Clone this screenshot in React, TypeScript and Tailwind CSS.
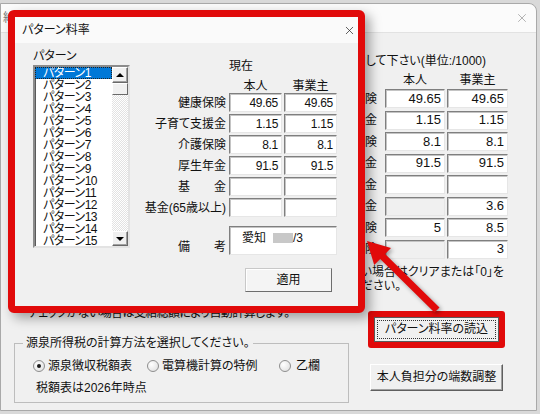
import React from 'react';
import { X } from 'lucide-react';

const dialogRows = [
  { label: '健康保険', a: '49.65', b: '49.65' },
  { label: '子育て支援金', a: '1.15', b: '1.15' },
  { label: '介護保険', a: '8.1', b: '8.1' },
  { label: '厚生年金', a: '91.5', b: '91.5' },
  { label: '基金', spread: true, a: '', b: '' },
  { label: '基金(65歳以上)', a: '', b: '' },
];

const mainRows = [
  { label: '保険', a: '49.65', b: '49.65' },
  { label: '援金', a: '1.15', b: '1.15' },
  { label: '保険', a: '8.1', b: '8.1' },
  { label: '年金', a: '91.5', b: '91.5' },
  { label: '基金', a: '', b: '' },
  { label: '出金', a: '', b: '3.6', off: true },
  { label: '保険', a: '5', b: '8.5' },
  { label: '保険', a: '', b: '3', off: true },
];

const patterns = Array.from({ length: 15 }, (_, i) => `パターン${i + 1}`);

const Box: React.FC<{ value: string; off?: boolean; className?: string }> = ({ value, off, className }) => (
  <div
    className={`flex items-center justify-end pr-[3px] border border-t-[#7f7f7f] border-l-[#7f7f7f] border-b-[#e6e6e6] border-r-[#e6e6e6] shadow-[inset_1px_1px_0_#c4c4c4] ${off ? 'bg-[#f0f0f0]' : 'bg-white'} ${className ?? ''}`}
  >
    {value}
  </div>
);

const Spread: React.FC<{ text: string }> = ({ text }) => (
  <span className="flex w-[48px] justify-between">
    {text.split('').map((c, i) => (
      <span key={i}>{c}</span>
    ))}
  </span>
);

const Radio: React.FC<{ checked?: boolean }> = ({ checked }) => (
  <span className="w-[12px] h-[12px] rounded-full border border-[#8e8e8e] bg-[radial-gradient(circle_at_35%_35%,#ffffff,#dcdcdc)] flex items-center justify-center shrink-0">
    {checked && <span className="w-[4px] h-[4px] rounded-full bg-[#1a1a1a]" />}
  </span>
);

const ArrowBtn: React.FC<{ up?: boolean; className?: string }> = ({ up, className }) => (
  <div className={`bg-[#f0f0f0] border border-t-white border-l-white border-b-[#696969] border-r-[#696969] shadow-[inset_-1px_-1px_0_#a0a0a0] flex items-center justify-center ${className ?? ''}`}>
    {up ? (
      <span className="w-0 h-0 border-l-[4px] border-r-[4px] border-b-[4px] border-l-transparent border-r-transparent border-b-black" />
    ) : (
      <span className="w-0 h-0 border-l-[4px] border-r-[4px] border-t-[4px] border-l-transparent border-r-transparent border-t-black" />
    )}
  </div>
);

export default function App() {
  return (
    <div className="w-[540px] h-[414px] relative overflow-hidden bg-[#d9d9d9] text-[12px] text-[#111] font-['Liberation_Sans','Noto_Sans_CJK_JP',sans-serif] [font-feature-settings:'palt']">
      {/* main window */}
      <div className="mt-[3px] w-[537px] h-[408px] bg-[#f0f0f0] border border-[#a9a9a9] rounded-tr-[8px] flex flex-col overflow-hidden">
        <div className="h-[29px] shrink-0 bg-[#fbfbfb] border-b border-[#e2e2e2] rounded-tr-[8px] flex items-center justify-between pl-[2px] pr-[7px]">
          <span className="text-[#777] text-[12px]">給</span>
          <X size={14} strokeWidth={1.1} className="text-[#8a8a8a]" />
        </div>

        <div className="flex-1 flex min-w-0">
          {/* left column, mostly behind the dialog */}
          <div className="w-[349px] shrink-0 flex flex-col pt-[273px]">
            <div className="pl-[27px] leading-[14px] whitespace-nowrap tracking-[-0.6px]">チェックがない場合は支給総額により自動計算します。</div>
            <fieldset className="mt-[16px] ml-[13px] w-[335px] m-0 p-0 min-w-0 border border-[#bdbdbd] pb-[7px]">
              <legend className="ml-[8px] px-[3px] leading-[14px]">源泉所得税の計算方法を選択してください。</legend>
              <div className="pt-[9px] pl-[18px] flex items-center h-[23px] leading-[14px]">
                <div className="w-[114px] flex items-center gap-[3px]">
                  <Radio checked />
                  <span>源泉徴収税額表</span>
                </div>
                <div className="w-[132px] flex items-center gap-[3px]">
                  <Radio />
                  <span>電算機計算の特例</span>
                </div>
                <div className="flex items-center gap-[5px]">
                  <Radio />
                  <span>乙欄</span>
                </div>
              </div>
              <div className="mt-[8px] pl-[21px] leading-[14px]">税額表は2026年時点</div>
            </fieldset>
          </div>

          {/* right column */}
          <div className="flex-1 min-w-0 flex flex-col">
            <div className="mt-[21px] flex justify-end pr-[50px] leading-[14px] whitespace-nowrap">
              <span className="shrink-0">力して下さい(単位:/1000)</span>
            </div>
            <div className="mt-[5px] grid grid-cols-[33px_60px_61px] gap-x-[2px] leading-[14px]">
              <span />
              <span className="text-center">本人</span>
              <span className="text-center">事業主</span>
            </div>
            <div className="mt-[2px] grid grid-cols-[33px_60px_61px] gap-x-[2px] gap-y-[2.5px] text-[13px]">
              {mainRows.map((r, i) => (
                <React.Fragment key={i}>
                  <div className="flex justify-end items-center pr-[6px] whitespace-nowrap text-[12px]">
                    <span className="shrink-0">{r.label}</span>
                  </div>
                  <Box value={r.a} off={r.off} className="h-[19px]" />
                  <Box value={r.b} className="h-[19px]" />
                </React.Fragment>
              ))}
            </div>
            <div className="mt-[6px] flex justify-end pr-[32px] leading-[14px] whitespace-nowrap">
              <span className="shrink-0">していない場合はクリアまたは「0」を</span>
            </div>
            <div className="flex justify-end pr-[135px] leading-[14px] whitespace-nowrap">
              <span className="shrink-0">ください。</span>
            </div>
            <div className="mt-[18px] ml-[18px] w-[137px] h-[37px] border-[6px] border-[#e10a0a] rounded-[3px]">
              <div className="w-full h-full bg-[#f0f0f0] border border-[#5a5a5a] p-[2px]">
                <div className="w-full h-full border border-dotted border-[#333] flex items-center justify-center">
                  パターン料率の読込
                </div>
              </div>
            </div>
            <div className="mt-[16px] ml-[20px] w-[133px] h-[27px] bg-[#f0f0f0] border border-t-white border-l-white border-b-[#5f5f5f] border-r-[#5f5f5f] shadow-[inset_-1px_-1px_0_#a0a0a0] flex items-center justify-center">
              本人負担分の端数調整
            </div>
          </div>
        </div>
      </div>

      {/* pattern dialog, outlined in red */}
      <div className="absolute left-[8px] top-[10px] w-[357px] h-[303px] border-[7px] border-[#e10a0a] rounded-[6px] z-10 shadow-[5px_5px_12px_rgba(0,0,0,0.35)] flex flex-col bg-[#f0f0f0]">
        <div className="h-[26px] shrink-0 bg-[#fafafa] flex items-center justify-between pl-[7px] pr-[2px]">
          <span>パターン料率</span>
          <X size={13} strokeWidth={1.3} className="text-[#222]" />
        </div>
        <div className="flex pt-[6px] pl-[18px]">
          <div className="flex flex-col">
            <span className="leading-[14px]">パターン</span>
            <div className="mt-[2px] w-[97px] h-[183px] bg-white border-2 border-t-[#8c8c8c] border-l-[#8c8c8c] border-b-[#e3e3e3] border-r-[#e3e3e3] shadow-[inset_1px_1px_0_#5a5a5a] flex overflow-hidden">
              <div className="flex-1 flex flex-col">
                {patterns.map((p, i) => (
                  <div
                    key={p}
                    className={`h-[12px] shrink-0 leading-[12px] pl-[8px] text-[12px] tracking-[-0.5px] whitespace-nowrap ${i === 0 ? 'bg-[#0078d7] text-white outline outline-1 outline-dotted outline-[#222] -outline-offset-1' : ''}`}
                  >
                    {p}
                  </div>
                ))}
              </div>
              <div className="w-[16px] shrink-0 flex flex-col">
                <ArrowBtn up className="h-[16px]" />
                <div className="h-[12px] bg-[#f0f0f0] border border-t-white border-l-white border-b-[#696969] border-r-[#696969]" />
                <div className="flex-1 bg-[repeating-conic-gradient(#ffffff_0_25%,#e2e2e2_0_50%)] bg-[length:2px_2px]" />
                <ArrowBtn className="h-[15px]" />
              </div>
            </div>
          </div>

          <div className="ml-[10px] mt-[10px] flex flex-col">
            <div className="grid grid-cols-[87px_53px_53px] gap-x-[2px] leading-[14px]">
              <span />
              <span>現在</span>
              <span />
            </div>
            <div className="mt-[6px] grid grid-cols-[87px_53px_53px] gap-x-[2px] leading-[14px]">
              <span />
              <span className="text-center">本人</span>
              <span className="text-center">事業主</span>
            </div>
            <div className="grid grid-cols-[87px_53px_53px] gap-x-[2px] gap-y-[2px]">
              {dialogRows.map((r) => (
                <React.Fragment key={r.label}>
                  <div className="flex items-center justify-end pr-[1px] whitespace-nowrap">
                    {r.spread ? <Spread text={r.label} /> : r.label}
                  </div>
                  <Box value={r.a} className="h-[19px] tracking-[-0.3px]" />
                  <Box value={r.b} className="h-[19px] tracking-[-0.3px]" />
                </React.Fragment>
              ))}
            </div>
            <div className="mt-[9px] grid grid-cols-[87px_108px] gap-x-[2px]">
              <div className="flex items-end justify-end pr-[1px] pb-[1px] leading-[14px]">
                <Spread text="備考" />
              </div>
              <div className="h-[29px] bg-white border border-t-[#7f7f7f] border-l-[#7f7f7f] border-b-[#e6e6e6] border-r-[#e6e6e6] shadow-[inset_1px_1px_0_#c4c4c4] flex items-start pt-[4px] pl-[12px] leading-[14px]">
                <span>愛知</span>
                <span className="ml-[7px] mt-[2px] w-[20px] h-[10px] bg-[#c8c8c8]" />
                <span>/3</span>
              </div>
            </div>
            <div className="mt-[13px] ml-[105px] w-[87px] h-[24px] bg-[#f4f4f4] border border-t-[#c8c8c8] border-l-[#c8c8c8] border-b-[#6d6d6d] border-r-[#6d6d6d] shadow-[inset_1px_1px_0_#ffffff] flex items-center justify-center">
              適用
            </div>
          </div>
        </div>
      </div>

      {/* red annotation arrow */}
      <svg className="absolute left-0 top-0 z-20 pointer-events-none drop-shadow-[2px_2px_2px_rgba(0,0,0,0.35)]" width="540" height="414" viewBox="0 0 540 414">
        <polygon
          points="367,241 391,248 385.1,253.9 439.5,307.5 434.5,312.5 380.2,258.9 374.2,265"
          fill="#e10a0a"
        />
      </svg>
    </div>
  );
}
